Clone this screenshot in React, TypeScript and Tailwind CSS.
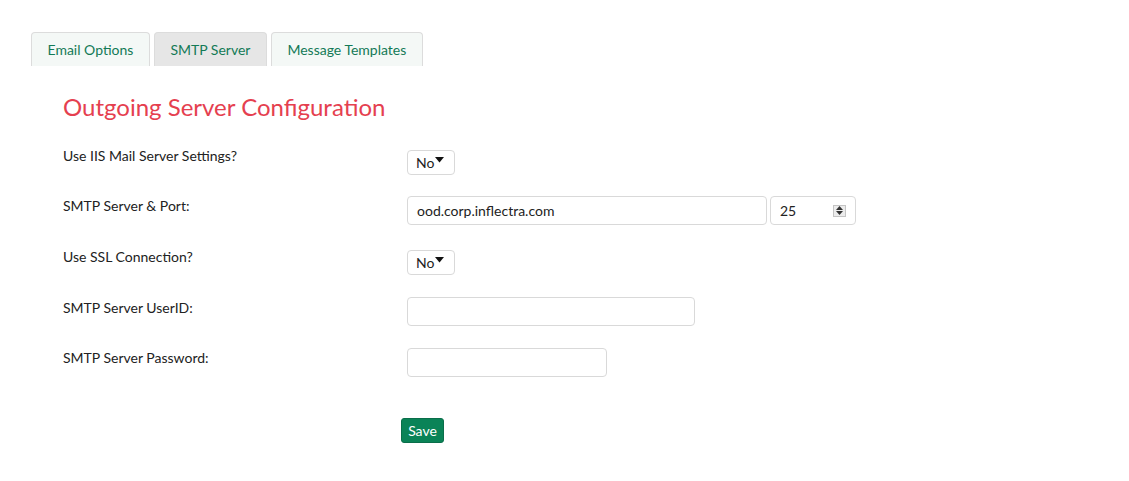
import React from 'react'

const tabs = [
  { label: 'Email Options', active: false },
  { label: 'SMTP Server', active: true },
  { label: 'Message Templates', active: false },
]

function NoSelect() {
  return (
    <div className="flex h-[25px] w-[48px] items-center rounded-[4px] border border-[#d9d9d9] bg-white pl-[8px] text-[14px] text-[#222]">
      <span>No</span>
      <svg width="9" height="6" viewBox="0 0 9 6" className="-mt-[6px] ml-[1px]">
        <path d="M0 0h9L4.5 5.5z" fill="#111" />
      </svg>
    </div>
  )
}

function TextBox({ width, value }: { width: string; value?: string }) {
  return (
    <div
      className={`flex h-[29px] items-center rounded-[4px] border border-[#d9d9d9] bg-white px-[9px] text-[14px] text-[#222] ${width}`}
    >
      {value}
    </div>
  )
}

export default function App() {
  return (
    <div className="min-h-[481px] w-[1129px] bg-white font-['Lato','Noto_Sans',sans-serif] text-[#333]">
      {/* Tab strip */}
      <div className="flex gap-[4px] pl-[31px] pt-[32px]">
        {tabs.map((t) => (
          <div
            key={t.label}
            className={`flex h-[34px] items-center rounded-t-[4px] border border-b-0 border-[#dcdcdc] px-[15.5px] text-[14px] text-[#137a56] ${
              t.active ? 'bg-[#e6e6e6]' : 'bg-[#f4f8f6]'
            }`}
          >
            {t.label}
          </div>
        ))}
      </div>

      <div className="pl-[63px]">
        <h1 className="mt-[26px] text-[24px] leading-[30px] text-[#e5404f]">Outgoing Server Configuration</h1>

        <div className="mt-[28px] flex flex-col text-[14px] text-[#222]">
          <div className="flex items-start">
            <div className="-mt-[3px] w-[344px] leading-[18px]">Use IIS Mail Server Settings?</div>
            <NoSelect />
          </div>

          <div className="mt-[21px] flex items-start">
            <div className="mt-[1px] w-[344px] leading-[18px]">SMTP Server &amp; Port:</div>
            <TextBox width="w-[360px]" value="ood.corp.inflectra.com" />
            <div className="ml-[3px] flex h-[29px] w-[86px] items-center justify-between rounded-[4px] border border-[#d9d9d9] bg-white pl-[9px] pr-[9px]">
              <span>25</span>
              <div className="flex h-[12px] w-[13px] flex-col items-center justify-center gap-[1px] border border-[#c4c4c4] bg-[#ececec]">
                <svg width="7" height="4" viewBox="0 0 7 4">
                  <path d="M0 4h7L3.5 0z" fill="#333" />
                </svg>
                <svg width="7" height="4" viewBox="0 0 7 4">
                  <path d="M0 0h7L3.5 4z" fill="#333" />
                </svg>
              </div>
            </div>
          </div>

          <div className="mt-[25px] flex items-start">
            <div className="-mt-[2px] w-[344px] leading-[18px]">Use SSL Connection?</div>
            <NoSelect />
          </div>

          <div className="mt-[22px] flex items-start">
            <div className="mt-[2px] w-[344px] leading-[18px]">SMTP Server UserID:</div>
            <TextBox width="w-[288px]" />
          </div>

          <div className="mt-[22px] flex items-start">
            <div className="mt-[1px] w-[344px] leading-[18px]">SMTP Server Password:</div>
            <TextBox width="w-[200px]" />
          </div>

          <div className="mt-[41px] pl-[338px]">
            <button
              type="button"
              className="flex h-[25px] w-[43px] items-center justify-center rounded-[3px] border border-[#0a6e4a] bg-[#0a8357] text-[14px] text-white"
            >
              Save
            </button>
          </div>
        </div>
      </div>
    </div>
  )
}
